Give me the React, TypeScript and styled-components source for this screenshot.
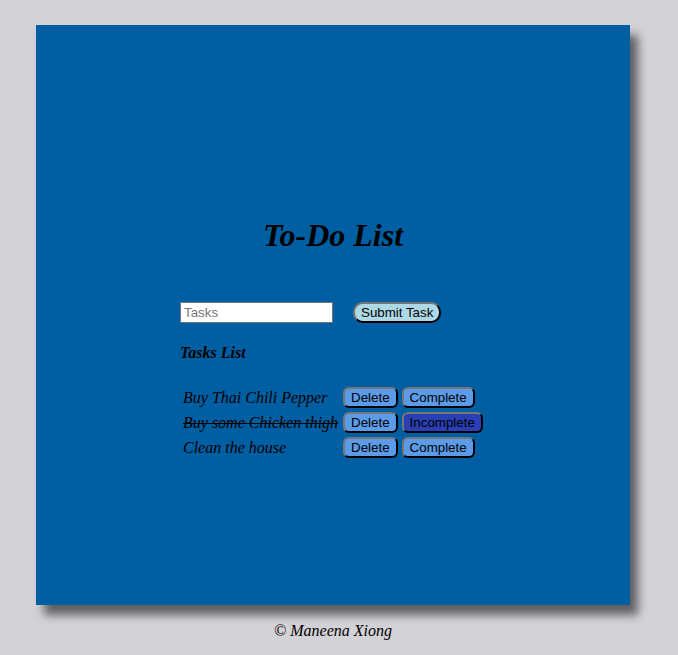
import React, { useState } from "react";
import styled, { createGlobalStyle } from "styled-components";

const Global = createGlobalStyle`
  html, body { margin: 0; padding: 0; }
  body { background: #d3d2d6; font-family: "Liberation Serif", "Times New Roman", serif; }
`;

const Page = styled.div`
  padding-top: 25px;
  padding-left: 36px;
  width: 678px;
  height: 655px;
  box-sizing: border-box;
  overflow: hidden;
`;

const Panel = styled.main`
  width: 594px;
  height: 580px;
  background: #005ea2;
  box-shadow: 8px 10px 9px rgba(0, 0, 0, 0.55);
  padding-top: 192px;
  box-sizing: border-box;
  display: flex;
  flex-direction: column;
  align-items: center;
`;

const Title = styled.h1`
  margin: 0;
  font-size: 32px;
  line-height: 37px;
  font-style: italic;
  font-weight: bold;
  color: #000;
`;

const Body = styled.section`
  width: 306px;
  margin-top: 48px;
  display: flex;
  flex-direction: column;
`;

const Form = styled.form`
  display: flex;
  align-items: center;
  gap: 20px;
`;

const Input = styled.input`
  width: 153px;
  height: 21px;
  box-sizing: border-box;
  border: 1px solid #767676;
  padding: 1px 3px;
  font-family: "Liberation Sans", Arial, sans-serif;
  font-size: 13.33px;
  background: #fff;
  outline: none;
  &::placeholder { color: #777; }
`;

const Btn = styled.button<{ $bg: string; $radius?: number }>`
  font-family: "Liberation Sans", Arial, sans-serif;
  font-size: 13.33px;
  color: #000;
  background: ${(p) => p.$bg};
  border: 2px outset #666;
  border-color: #777 #444 #444 #777;
  border-radius: ${(p) => p.$radius ?? 6}px;
  padding: 1px 6px;
  height: 21px;
  box-sizing: border-box;
  line-height: 15px;
  cursor: pointer;
`;

const ListTitle = styled.h3`
  margin: 20px 0 0;
  font-size: 16px;
  line-height: 19px;
  font-weight: bold;
  font-style: italic;
`;

const List = styled.div`
  margin-top: 25px;
  display: grid;
  grid-template-columns: max-content max-content max-content;
  column-gap: 4px;
  row-gap: 4px;
  align-items: center;
  justify-content: start;
  padding-left: 3px;
`;

const ItemText = styled.span<{ $done: boolean }>`
  font-size: 16px;
  line-height: 21px;
  font-style: italic;
  text-decoration: ${(p) => (p.$done ? "line-through" : "none")};
  padding-right: 1px;
`;

const Footer = styled.footer`
  width: 594px;
  text-align: center;
  margin-top: 17px;
  font-style: italic;
  font-size: 16px;
  line-height: 18px;
`;

type Task = { text: string; done: boolean };

export default function App() {
  const [tasks, setTasks] = useState<Task[]>([
    { text: "Buy Thai Chili Pepper", done: false },
    { text: "Buy some Chicken thigh", done: true },
    { text: "Clean the house", done: false },
  ]);
  const [value, setValue] = useState("");

  return (
    <Page>
      <Global />
      <Panel>
        <Title>To-Do List</Title>
        <Body>
          <Form
            onSubmit={(e) => {
              e.preventDefault();
              if (value.trim()) {
                setTasks([...tasks, { text: value, done: false }]);
                setValue("");
              }
            }}
          >
            <Input placeholder="Tasks" value={value} onChange={(e) => setValue(e.target.value)} />
            <Btn type="submit" $bg="#add8e6" $radius={10}>Submit Task</Btn>
          </Form>
          <ListTitle>Tasks List</ListTitle>
          <List>
            {tasks.map((t, i) => (
              <React.Fragment key={i}>
                <ItemText $done={t.done}>{t.text}</ItemText>
                <Btn $bg="#5b9be8" onClick={() => setTasks(tasks.filter((_, j) => j !== i))}>Delete</Btn>
                <Btn
                  $bg={t.done ? "#2a3fb3" : "#5b9be8"}
                  style={{ justifySelf: "start" }}
                  onClick={() => setTasks(tasks.map((x, j) => (j === i ? { ...x, done: !x.done } : x)))}
                >
                  {t.done ? "Incomplete" : "Complete"}
                </Btn>
              </React.Fragment>
            ))}
          </List>
        </Body>
      </Panel>
      <Footer>© Maneena Xiong</Footer>
    </Page>
  );
}
